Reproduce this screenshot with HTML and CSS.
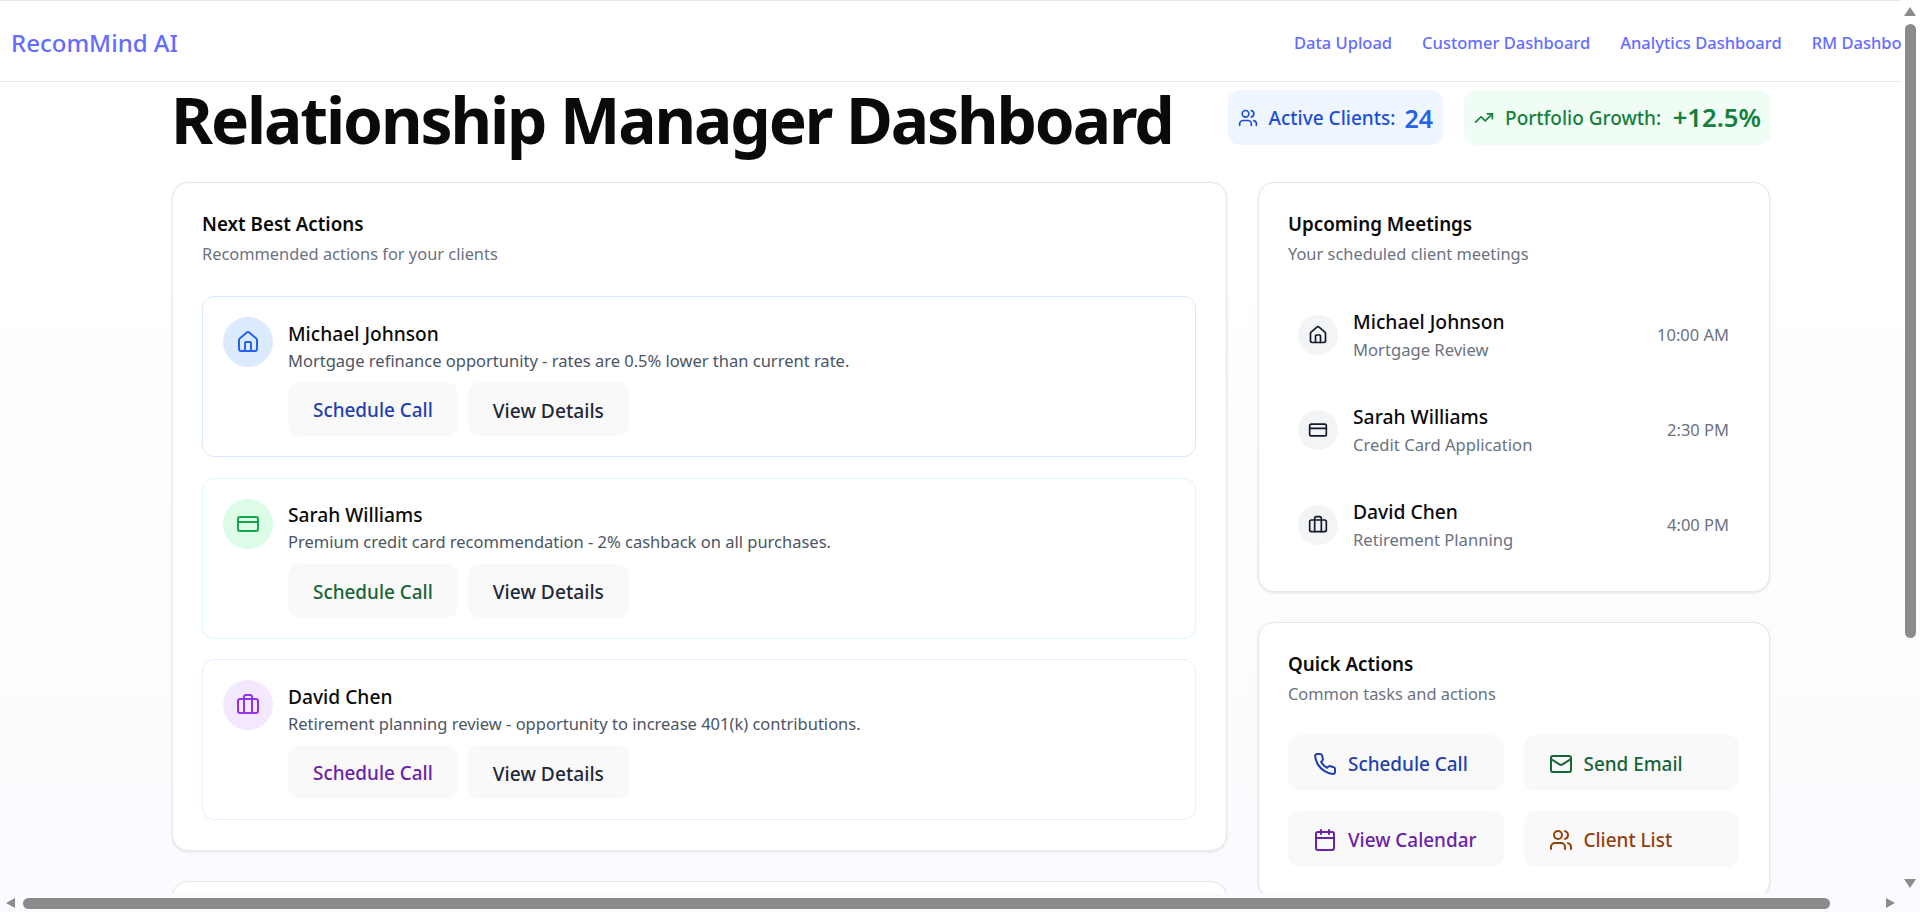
FILE: index.html
```html
<!DOCTYPE html>
<html lang="en">
<head>
<meta charset="utf-8">
<title>Relationship Manager Dashboard</title>
<link rel="stylesheet" href="styles.css">
</head>
<body>
<svg class="defs" aria-hidden="true">
  <symbol id="i-home" viewBox="0 0 24 24"><path d="M15 21v-8a1 1 0 0 0-1-1h-4a1 1 0 0 0-1 1v8"/><path d="M3 10a2 2 0 0 1 .709-1.528l7-5.999a2 2 0 0 1 2.582 0l7 5.999A2 2 0 0 1 21 10v9a2 2 0 0 1-2 2H5a2 2 0 0 1-2-2z"/></symbol>
  <symbol id="i-card" viewBox="0 0 24 24"><rect width="20" height="14" x="2" y="5" rx="2"/><line x1="2" x2="22" y1="10" y2="10"/></symbol>
  <symbol id="i-case" viewBox="0 0 24 24"><path d="M16 20V4a2 2 0 0 0-2-2h-4a2 2 0 0 0-2 2v16"/><rect width="20" height="14" x="2" y="6" rx="2"/></symbol>
  <symbol id="i-users" viewBox="0 0 24 24"><path d="M16 21v-2a4 4 0 0 0-4-4H6a4 4 0 0 0-4 4v2"/><circle cx="9" cy="7" r="4"/><path d="M22 21v-2a4 4 0 0 0-3-3.87"/><path d="M16 3.13a4 4 0 0 1 0 7.75"/></symbol>
  <symbol id="i-trend" viewBox="0 0 24 24"><polyline points="22 7 13.5 15.5 8.5 10.5 2 17"/><polyline points="16 7 22 7 22 13"/></symbol>
  <symbol id="i-phone" viewBox="0 0 24 24"><path d="M22 16.92v3a2 2 0 0 1-2.18 2 19.79 19.79 0 0 1-8.63-3.07 19.5 19.5 0 0 1-6-6 19.79 19.79 0 0 1-3.07-8.67A2 2 0 0 1 4.11 2h3a2 2 0 0 1 2 1.72 12.84 12.84 0 0 0 .7 2.81 2 2 0 0 1-.45 2.11L8.09 9.91a16 16 0 0 0 6 6l1.27-1.27a2 2 0 0 1 2.11-.45 12.84 12.84 0 0 0 2.81.7A2 2 0 0 1 22 16.92z"/></symbol>
  <symbol id="i-mail" viewBox="0 0 24 24"><rect width="20" height="16" x="2" y="4" rx="2"/><path d="m22 7-8.97 5.7a1.94 1.94 0 0 1-2.06 0L2 7"/></symbol>
  <symbol id="i-cal" viewBox="0 0 24 24"><path d="M8 2v4"/><path d="M16 2v4"/><rect width="18" height="18" x="3" y="4" rx="2"/><path d="M3 10h18"/></symbol>
</svg>

<div class="viewport">
  <nav class="nav">
    <a class="logo">RecomMind AI</a>
    <div class="nav-links">
      <a class="nav-link">Data Upload</a>
      <a class="nav-link">Customer Dashboard</a>
      <a class="nav-link">Analytics Dashboard</a>
      <a class="nav-link">RM Dashboard</a>
    </div>
  </nav>

  <main class="main">
    <header class="page-head">
      <h1 class="page-title">Relationship Manager Dashboard</h1>
      <div class="stats">
        <div class="stat stat-blue">
          <svg class="icon icon-20"><use href="#i-users"/></svg>
          <span class="stat-label">Active Clients:</span>
          <span class="stat-value">24</span>
        </div>
        <div class="stat stat-green">
          <svg class="icon icon-20"><use href="#i-trend"/></svg>
          <span class="stat-label">Portfolio Growth:</span>
          <span class="stat-value">+12.5%</span>
        </div>
      </div>
    </header>

    <div class="grid">
      <div class="col">
        <section class="card">
          <h2 class="card-title">Next Best Actions</h2>
          <p class="card-sub">Recommended actions for your clients</p>
          <div class="actions">
            <article class="action action-blue">
              <div class="badge"><svg class="icon icon-24"><use href="#i-home"/></svg></div>
              <div class="action-body">
                <h3 class="action-name">Michael Johnson</h3>
                <p class="action-desc">Mortgage refinance opportunity - rates are 0.5% lower than current rate.</p>
                <div class="btn-row">
                  <button class="btn btn-primary">Schedule Call</button>
                  <button class="btn btn-neutral">View Details</button>
                </div>
              </div>
            </article>
            <article class="action action-green">
              <div class="badge"><svg class="icon icon-24"><use href="#i-card"/></svg></div>
              <div class="action-body">
                <h3 class="action-name">Sarah Williams</h3>
                <p class="action-desc">Premium credit card recommendation - 2% cashback on all purchases.</p>
                <div class="btn-row">
                  <button class="btn btn-primary">Schedule Call</button>
                  <button class="btn btn-neutral">View Details</button>
                </div>
              </div>
            </article>
            <article class="action action-purple">
              <div class="badge"><svg class="icon icon-24"><use href="#i-case"/></svg></div>
              <div class="action-body">
                <h3 class="action-name">David Chen</h3>
                <p class="action-desc">Retirement planning review - opportunity to increase 401(k) contributions.</p>
                <div class="btn-row">
                  <button class="btn btn-primary">Schedule Call</button>
                  <button class="btn btn-neutral">View Details</button>
                </div>
              </div>
            </article>
          </div>
        </section>
        <section class="card card-stub"></section>
      </div>

      <div class="col">
        <section class="card card-meetings">
          <h2 class="card-title">Upcoming Meetings</h2>
          <p class="card-sub">Your scheduled client meetings</p>
          <div class="meetings">
            <div class="meeting">
              <div class="meeting-badge"><svg class="icon icon-20"><use href="#i-home"/></svg></div>
              <div class="meeting-body">
                <h3 class="meeting-name">Michael Johnson</h3>
                <p class="meeting-sub">Mortgage Review</p>
              </div>
              <span class="meeting-time">10:00 AM</span>
            </div>
            <div class="meeting">
              <div class="meeting-badge"><svg class="icon icon-20"><use href="#i-card"/></svg></div>
              <div class="meeting-body">
                <h3 class="meeting-name">Sarah Williams</h3>
                <p class="meeting-sub">Credit Card Application</p>
              </div>
              <span class="meeting-time">2:30 PM</span>
            </div>
            <div class="meeting">
              <div class="meeting-badge"><svg class="icon icon-20"><use href="#i-case"/></svg></div>
              <div class="meeting-body">
                <h3 class="meeting-name">David Chen</h3>
                <p class="meeting-sub">Retirement Planning</p>
              </div>
              <span class="meeting-time">4:00 PM</span>
            </div>
          </div>
        </section>

        <section class="card">
          <h2 class="card-title">Quick Actions</h2>
          <p class="card-sub">Common tasks and actions</p>
          <div class="quick">
            <button class="quick-btn quick-blue"><svg class="icon icon-24"><use href="#i-phone"/></svg>Schedule Call</button>
            <button class="quick-btn quick-green"><svg class="icon icon-24"><use href="#i-mail"/></svg>Send Email</button>
            <button class="quick-btn quick-purple"><svg class="icon icon-24"><use href="#i-cal"/></svg>View Calendar</button>
            <button class="quick-btn quick-orange"><svg class="icon icon-24"><use href="#i-users"/></svg>Client List</button>
          </div>
        </section>
      </div>
    </div>
  </main>
</div>

<div class="sb sb-v">
  <span class="arrow arrow-up"></span>
  <span class="thumb thumb-v"></span>
  <span class="arrow arrow-down"></span>
</div>
<div class="sb sb-h">
  <span class="arrow arrow-left"></span>
  <span class="thumb thumb-h"></span>
  <span class="arrow arrow-right"></span>
</div>
</body>
</html>
```

FILE: styles.css
```css
* { box-sizing: border-box; }

html, body {
  margin: 0;
  height: 912px;
  overflow: hidden;
}

body {
  position: relative;
  font-family: "Noto Sans", "Open Sans", sans-serif;
  color: #0a0a0a;
  background: linear-gradient(to bottom, #ffffff 25%, #fafbfe 100%);
}

h1, h2, h3, p { margin: 0; }

.defs { width: 0; height: 0; display: block; }

.viewport {
  width: 1901px;
  height: 893px;
  overflow: hidden;
}

.icon {
  fill: none;
  stroke: currentColor;
  stroke-width: 2;
  stroke-linecap: round;
  stroke-linejoin: round;
  flex: none;
  display: block;
}
.icon-20 { width: 20px; height: 20px; }
.icon-24 { width: 24px; height: 24px; }

/* Nav */
.nav {
  width: 1960px;
  height: 82px;
  padding: 2px 32px 0 11px;
  display: flex;
  align-items: center;
  justify-content: space-between;
  background: #fff;
  border-top: 1px solid #e5e7eb;
  border-bottom: 1px solid #e5e7eb;
}
.logo { font-size: 24px; font-weight: 500; color: #646cff; }
.nav-links { display: flex; gap: 30px; }
.nav-link { font-size: 16.5px; font-weight: 500; color: #646cff; white-space: nowrap; }

/* Page header */
.main { width: 1599px; margin-left: 172px; }
.page-head {
  height: 100px;
  display: flex;
  align-items: flex-start;
  justify-content: space-between;
}
.page-title {
  margin-left: -1px;
  font-size: 64px;
  line-height: 76px;
  font-weight: 700;
  letter-spacing: -2.08px;
  white-space: nowrap;
}
.stats { display: flex; gap: 21px; margin-top: 8px; }
.stat {
  height: 55px;
  padding: 0 10px;
  display: flex;
  align-items: center;
  border-radius: 12px;
}
.stat-label { margin-left: 11px; font-size: 19px; font-weight: 500; }
.stat-value { margin-left: 9px; font-size: 25px; font-weight: 600; }
.stat-blue { background: #eff6ff; color: #1d4ed8; }
.stat-blue .stat-value { color: #2563eb; }
.stat-green { background: #f0fdf4; color: #15803d; }
.stat-green .stat-value { margin-left: 11.5px; font-size: 25.7px; }

/* Grid */
.grid {
  display: grid;
  grid-template-columns: 1055px 512px;
  gap: 31px;
}
.col { display: flex; flex-direction: column; gap: 30px; }
.card {
  background: #fff;
  border: 1px solid #e5e7eb;
  border-radius: 16px;
  padding: 28px 30px 30px 29px;
  box-shadow: 0 1px 3px rgba(0, 0, 0, 0.1);
}
.card-meetings { padding-bottom: 19px; }
.card-stub { height: 100px; }
.card-title { font-size: 18.8px; line-height: 27px; font-weight: 600; color: #0a0a0a; }
.card-sub { margin-top: 4px; font-size: 16.4px; line-height: 24px; color: #6b7280; }

/* Next best actions */
.actions { margin-top: 30px; display: flex; flex-direction: column; gap: 20.5px; }
.action {
  height: 161px;
  padding: 20px;
  display: flex;
  gap: 15px;
  border: 1px solid;
  border-radius: 12px;
}
.badge {
  width: 50px;
  height: 50px;
  flex: none;
  border-radius: 50%;
  display: flex;
  align-items: center;
  justify-content: center;
}
.action-blue { border-color: #dbeafe; }
.action-blue .badge { background: #dbeafe; color: #2563eb; }
.action-blue .btn-primary { color: #1e40af; }
.action-green { border-color: #dcfce7; }
.action-green .badge { background: #dcfce7; color: #16a34a; }
.action-green .btn-primary { color: #166534; }
.action-purple { border-color: #f3e8ff; }
.action-purple .badge { background: #f3e8ff; color: #9333ea; }
.action-purple .btn-primary { color: #6b21a8; }

.action-body { padding-top: 2.5px; }
.action-name { font-size: 19.2px; line-height: 27px; font-weight: 500; color: #0a0a0a; }
.action-desc { font-size: 16.5px; line-height: 24px; color: #4b5563; margin-top: 2px; }
.btn-row { display: flex; gap: 10px; margin-top: 9.5px; }
.btn {
  height: 54px;
  padding: 2px 25px 0;
  border: 0;
  border-radius: 12px;
  background: #f9f9fa;
  font-family: inherit;
  font-size: 18.9px;
  font-weight: 500;
}
.btn-neutral { color: #1f2937; font-size: 19.2px; }

/* Meetings */
.meetings { margin-top: 21px; display: flex; flex-direction: column; }
.meeting {
  height: 95px;
  padding: 0 10px;
  display: flex;
  align-items: center;
  gap: 15px;
}
.meeting-badge {
  width: 40px;
  height: 40px;
  flex: none;
  border-radius: 50%;
  background: #f3f4f6;
  color: #111827;
  display: flex;
  align-items: center;
  justify-content: center;
}
.meeting-body { flex: 1; }
.meeting-name { font-size: 19.3px; line-height: 27px; font-weight: 500; color: #0a0a0a; }
.meeting-sub { font-size: 16.6px; line-height: 24px; margin-top: 3px; color: #6b7280; }
.meeting-time { font-size: 16.5px; color: #6b7280; }

/* Quick actions */
.quick {
  margin-top: 29px;
  display: grid;
  grid-template-columns: 1fr 1fr;
  gap: 20px;
}
.quick-btn {
  height: 56px;
  padding: 2px 25px 0;
  display: flex;
  align-items: center;
  gap: 11px;
  border: 0;
  border-radius: 12px;
  background: #f9f9fa;
  font-family: inherit;
  font-size: 18.9px;
  font-weight: 500;
}
.quick-blue { color: #1e40af; }
.quick-green { color: #166534; }
.quick-purple { color: #6b21a8; }
.quick-orange { color: #92400e; }

/* Scrollbars drawn over the page */
.sb { position: absolute; }
.sb-v { top: 0; right: 0; width: 19px; height: 893px; }
.sb-h { left: 0; bottom: 0; width: 1901px; height: 19px; }
.thumb { position: absolute; background: #8b8b8b; border-radius: 6px; }
.thumb-v { left: 4px; top: 24px; width: 11px; height: 614px; }
.thumb-h { left: 23px; top: 5px; width: 1807px; height: 11px; }
.arrow { position: absolute; width: 0; height: 0; border-style: solid; border-color: transparent; }
.arrow-up { left: 3px; top: 7px; border-width: 0 6.5px 9px; border-bottom-color: #8b8b8b; }
.arrow-down { left: 3px; top: 879px; border-width: 9px 6.5px 0; border-top-color: #8b8b8b; }
.arrow-left { left: 6px; top: 5px; border-width: 5.5px 9px 5.5px 0; border-right-color: #8b8b8b; }
.arrow-right { left: 1886px; top: 5px; border-width: 5.5px 0 5.5px 9px; border-left-color: #8b8b8b; }
```
